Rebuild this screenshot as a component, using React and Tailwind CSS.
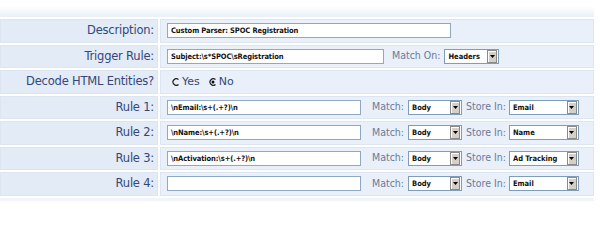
import React from "react";

const Arrow = () => (
  <span className="flex h-[13px] w-[10px] items-center justify-center border border-[#8a8a8a] bg-[#d4d0c8] shadow-[inset_1px_1px_0_#fff]">
    <svg width="5" height="3" viewBox="0 0 5 3"><path d="M0 0h5L2.5 3z" fill="#000" /></svg>
  </span>
);

const Select = ({ value, w }) => (
  <span className={`flex h-[15px] items-center justify-between border border-[#7f9db9] bg-white pl-[3px] pr-[1px] ${w}`}>
    <span className="font-['DejaVu_Sans_Condensed'] text-[7.5px] font-bold text-[#111]">{value}</span>
    <Arrow />
  </span>
);

const Input = ({ value, w }) => (
  <span className={`flex h-[15px] items-center border border-[#8fa8c4] bg-white pl-[3px] ${w}`}>
    <span className="font-['DejaVu_Sans_Condensed'] text-[7.5px] font-bold tracking-[-0.1px] text-[#111] whitespace-nowrap">{value}</span>
  </span>
);

const Row = ({ label, children }) => (
  <div className="flex h-[23.5px] gap-[2px] mr-[6px] mt-[2px]">
    <div className="flex w-[158px] items-center justify-end border border-[#dce6f2] bg-[#e3ebf6] pr-[3px] text-[11.5px] tracking-[-0.2px] text-[#34477a]">
      {label}
    </div>
    <div className="flex flex-1 items-center border border-[#dce6f2] bg-[#e9f0f9] pl-[6px]">{children}</div>
  </div>
);

const Radio = ({ checked }) => (
  <span className="relative mr-[2px] inline-block h-[8px] w-[8px]">
    <svg width="8" height="8" viewBox="0 0 8 8">
      <path d="M6.5 1.5A3.3 3.3 0 1 0 6.5 6.5" stroke="#222" strokeWidth="1.2" fill="none" />
      {checked && <circle cx="4" cy="4" r="1.5" fill="#111" />}
    </svg>
  </span>
);

const sub = "font-['DejaVu_Sans_Condensed'] text-[10.5px] text-[#6b7a99]";

const RuleRow = ({ n, value, store }) => (
  <Row label={`Rule ${n}:`}>
    <Input value={value} w="w-[194px]" />
    <span className={`ml-[11px] mr-[4px] ${sub}`}>Match:</span>
    <Select value="Body" w="w-[54px]" />
    <span className={`ml-[4px] mr-[3px] ${sub}`}>Store In:</span>
    <Select value={store} w="w-[70px]" />
  </Row>
);

export default function App() {
  return (
    <div className="h-[201px] w-[600px] overflow-hidden bg-white font-['DejaVu_Sans',sans-serif]">
      <div className="h-[6px]" />
      <div className="mr-[6px] h-[11px] bg-gradient-to-b from-white to-[#e9f0f8]" />
      <Row label="Description:">
        <Input value="Custom Parser: SPOC Registration" w="w-[284px]" />
      </Row>
      <Row label="Trigger Rule:">
        <Input value="Subject:\s*SPOC\sRegistration" w="w-[217px]" />
        <span className={`ml-[8px] mr-[4px] ${sub}`}>Match On:</span>
        <Select value="Headers" w="w-[55px]" />
      </Row>
      <Row label="Decode HTML Entities?">
        <span className="ml-[5px] flex items-center text-[11px] text-[#34477a]">
          <Radio />
          <span>Yes</span>
          <span className="ml-[9px]" />
          <Radio checked />
          <span>No</span>
        </span>
      </Row>
      <RuleRow n={1} value="\nEmail:\s+(.+?)\n" store="Email" />
      <RuleRow n={2} value="\nName:\s+(.+?)\n" store="Name" />
      <RuleRow n={3} value="\nActivation:\s+(.+?)\n" store="Ad Tracking" />
      <RuleRow n={4} value="" store="Email" />
      <div className="mr-[6px] mt-[2px] h-[10px] bg-[#f1f5fb]" />
    </div>
  );
}
